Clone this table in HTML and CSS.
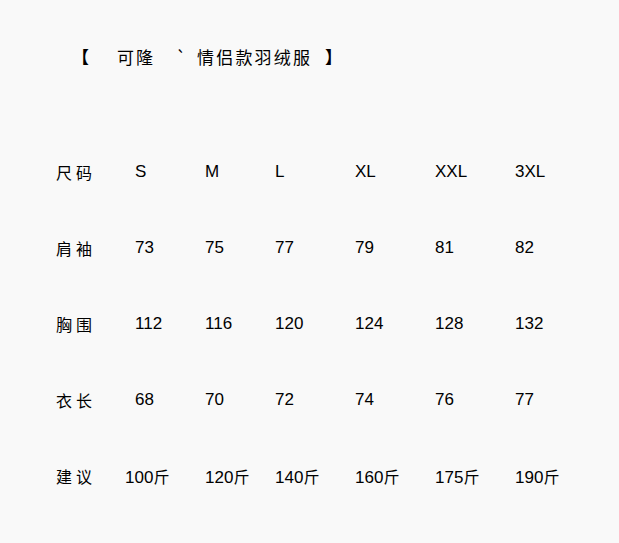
FILE: index.html
```html
<!DOCTYPE html>
<html lang="zh">
<head>
<meta charset="utf-8">
<link rel="stylesheet" href="styles.css">
</head>
<body>
<div class="page">
  <div class="title">
    <span class="br-open">【</span>
    <span class="brand">可隆</span>
    <span class="tick">`</span>
    <span class="name">情侣款羽绒服</span>
    <span class="br-close">】</span>
  </div>
  <div class="table">
    <div class="row">
      <span class="label">尺码</span>
      <span>S</span><span>M</span><span>L</span><span>XL</span><span>XXL</span><span>3XL</span>
    </div>
    <div class="row">
      <span class="label">肩袖</span>
      <span>73</span><span>75</span><span>77</span><span>79</span><span>81</span><span>82</span>
    </div>
    <div class="row">
      <span class="label">胸围</span>
      <span>112</span><span>116</span><span>120</span><span>124</span><span>128</span><span>132</span>
    </div>
    <div class="row">
      <span class="label">衣长</span>
      <span>68</span><span>70</span><span>72</span><span>74</span><span>76</span><span>77</span>
    </div>
    <div class="row">
      <span class="label">建议</span>
      <span class="wide">100<i>斤</i></span><span>120<i>斤</i></span><span>140<i>斤</i></span><span>160<i>斤</i></span><span>175<i>斤</i></span><span>190<i>斤</i></span>
    </div>
  </div>
</div>
</body>
</html>
```
FILE: styles.css
```css
html, body {
  margin: 0;
  padding: 0;
  background: #f9f9f9;
}
.page {
  width: 619px;
  height: 543px;
  color: #000;
  font-family: "Liberation Sans", "Noto Sans CJK SC", sans-serif;
  font-size: 17px;
}
.title {
  display: grid;
  grid-template-columns: 45px 59px 21px 128px auto;
  align-items: center;
  height: 24px;
  padding-top: 44px;
  padding-left: 72px;
  font-family: "Noto Sans CJK SC", sans-serif;
  font-size: 17px;
  white-space: pre;
}
.br-open { font-weight: bold; }
.brand { letter-spacing: 2px; }
.name { letter-spacing: 2.2px; }
.br-close { font-weight: bold; }
.table {
  padding-top: 66px;
  padding-left: 56px;
}
.row {
  display: grid;
  grid-template-columns: 79px 70px 70px 80px 80px 80px auto;
  align-items: center;
  height: 76px;
}
.label {
  font-family: "Noto Sans CJK SC", sans-serif;
  font-size: 16px;
  letter-spacing: 4px;
}
.row i {
  font-style: normal;
  font-family: "Noto Sans CJK SC", sans-serif;
  font-size: 16px;
}
.wide {
  margin-left: -10px;
}
```
